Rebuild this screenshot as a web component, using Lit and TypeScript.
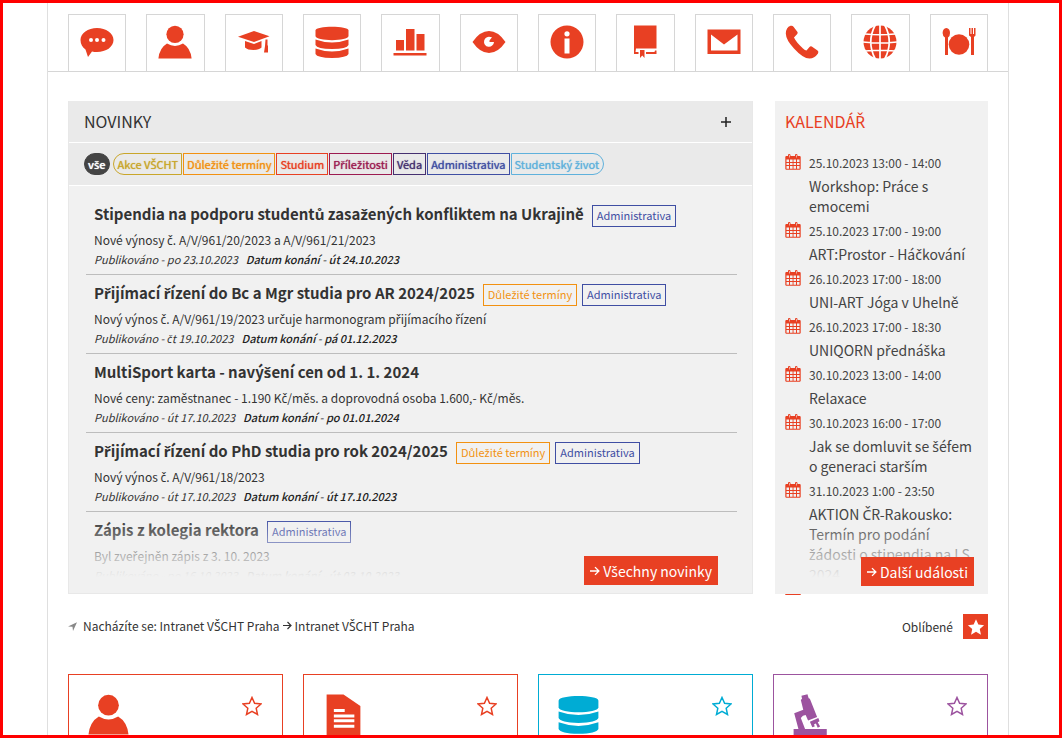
import { LitElement, html, css, svg } from "lit";
import { customElement, property } from "lit/decorators.js";

type Tag = { label: string; color: string };

const AKCE: Tag = { label: "Akce VŠCHT", color: "#c9a62a" };
const TERMINY: Tag = { label: "Důležité termíny", color: "#f29111" };
const STUDIUM: Tag = { label: "Studium", color: "#e84023" };
const PRILEZITOSTI: Tag = { label: "Příležitosti", color: "#9c1b51" };
const VEDA: Tag = { label: "Věda", color: "#453070" };
const ADMIN: Tag = { label: "Administrativa", color: "#3f4ea3" };
const ZIVOT: Tag = { label: "Studentský život", color: "#5fb1dc" };

const FILTERS = [AKCE, TERMINY, STUDIUM, PRILEZITOSTI, VEDA, ADMIN, ZIVOT];

const NEWS = [
  { title: "Stipendia na podporu studentů zasažených konfliktem na Ukrajině", tags: [ADMIN], text: "Nové výnosy č. A/V/961/20/2023 a A/V/961/21/2023", pub: "po 23.10.2023", date: "út 24.10.2023" },
  { title: "Přijímací řízení do Bc a Mgr studia pro AR 2024/2025", tags: [TERMINY, ADMIN], text: "Nový výnos č. A/V/961/19/2023 určuje harmonogram přijímacího řízení", pub: "čt 19.10.2023", date: "pá 01.12.2023" },
  { title: "MultiSport karta - navýšení cen od 1. 1. 2024", tags: [], text: "Nové ceny: zaměstnanec - 1.190 Kč/měs. a doprovodná osoba 1.600,- Kč/měs.", pub: "út 17.10.2023", date: "po 01.01.2024" },
  { title: "Přijímací řízení do PhD studia pro rok 2024/2025", tags: [TERMINY, ADMIN], text: "Nový výnos č. A/V/961/18/2023", pub: "út 17.10.2023", date: "út 17.10.2023" },
  { title: "Zápis z kolegia rektora", tags: [ADMIN], text: "Byl zveřejněn zápis z 3. 10. 2023", pub: "po 16.10.2023", date: "út 03.10.2023" },
];

const EVENTS = [
  ["25.10.2023 13:00 - 14:00", "Workshop: Práce s emocemi"],
  ["25.10.2023 17:00 - 19:00", "ART:Prostor - Háčkování"],
  ["26.10.2023 17:00 - 18:00", "UNI-ART Jóga v Uhelně"],
  ["26.10.2023 17:00 - 18:30", "UNIQORN přednáška"],
  ["30.10.2023 13:00 - 14:00", "Relaxace"],
  ["30.10.2023 16:00 - 17:00", "Jak se domluvit se šéfem o generaci starším"],
  ["31.10.2023 1:00 - 23:50", "AKTION ČR-Rakousko: Termín pro podání žádosti o stipendia na LS 2024"],
];

// The CJK family has no glyphs for these Czech letters, so they are set in Noto Sans.
const cz = (text: string) =>
  text.split(/([čďňřšťžůČĎŇŘŠŤŽŮ]+)/).map((part, i) => (i % 2 ? html`<span class="ext">${part}</span>` : part));

// Every tile icon is drawn on a 34 x 34 grid.
const ICONS: Record<string, unknown> = {
  chat: svg`<path fill-rule="evenodd" d="M17 3C26 3 33.500 8 33.500 15C33.500 22 26 27 17 27C15 27 13.500 26.800 12 26.400L8 32L5.500 24.500C2.500 22.500 .500 19 .500 15C.500 8 8 3 17 3ZM11 13A2 2 0 1 0 11 17A2 2 0 1 0 11 13ZM17 13A2 2 0 1 0 17 17A2 2 0 1 0 17 13ZM23.500 13A2 2 0 1 0 23.500 17A2 2 0 1 0 23.500 13Z"/>`,
  user: svg`<circle cx="17" cy="9.300" r="8.600"/><path d="M9 18.600Q17 23.500 25 18.600Q32.500 23 33.600 33.600H.400Q1.500 23 9 18.600Z"/>`,
  cap: svg`<path d="M1 11.800L17 6L32.500 11.300L17 17Z"/><path d="M8 16L17 19L24.500 16V22.500Q22 25 16.500 25Q10.500 25 8 22.500ZM28.500 14.500H30.500V20L31 21V27.500H27L28 21Z"/>`,
  database: svg`<path d="M.500 5.500C.500 .500 33.500 .500 33.500 5.500V11C33.500 16.500 .500 16.500 .500 11Z"/><path d="M.500 14.500Q17 20.500 33.500 14.500V20Q32 23.800 17 24Q2 23.800 .500 20ZM.500 23.500Q17 29.500 33.500 23.500V29Q32 32.700 17 33Q2 32.700 .500 29Z"/>`,
  chart: svg`<path d="M3 15H11V25.500H3ZM13 4H21.500V25.500H13ZM23.500 9H31.500V25.500H23.500ZM.500 28H33.500V30.500H.500Z"/>`,
  eye: svg`<path fill-rule="evenodd" d="M.500 17Q8 6 17 6T33.500 17Q26 28 17 28T.500 17ZM18.500 12A5 5 0 1 0 22 17H17.500V15.500L20 12.300Z"/>`,
  info: svg`<path fill-rule="evenodd" d="M17 .500A16.500 16.500 0 1 0 17 33.500A16.500 16.500 0 1 0 17 .500ZM17 6.200A2.600 2.600 0 1 1 17 11.400A2.600 2.600 0 1 1 17 6.200ZM14.500 13.500H19.500V28.500H14.500Z"/>`,
  book: svg`<path d="M6 .500H28.500V23.500H8L7.500 27H10.500V29H6ZM12 25H16.500V33L14.300 30.500L12 33ZM18 27H26.500L27 25.500H28.500V29H18Z"/>`,
  mail: svg`<path fill-rule="evenodd" d="M.500 4.500H33.500V29H.500ZM4 9.500V25.500H30.500V9.500L17 19.500Z"/>`,
  phone: svg`<path d="M5.500 .800Q7.500 .200 8.500 1.800L12.500 7Q13 8 12.200 9L9 12.500Q11 17 18 23.500Q20 25.500 21.500 25.600L24.500 22Q25.500 20.800 26.800 21.500L32.500 25.500Q34 26.500 33 28.500Q29.500 33.500 24.500 33.500Q18 33.500 9 23.500Q1 15 .800 8.500Q1 2.500 5.500 .800Z"/>`,
  globe: svg`<circle cx="17" cy="17" r="16.500"/><path stroke="#fff" stroke-width="1.700" fill="none" d="M17 0V34M0 17Q17 19 34 17M2 9Q17 10.500 32 9M2 26Q17 24.500 32 26M12 .500Q3.500 17 12 33.500M22 .500Q30.500 17 22 33.500"/>`,
  meal: svg`<circle cx="17" cy="19.500" r="10.300"/><path d="M4.300 3Q8 3.500 8 8Q8 11.500 6 12.500V30H3V12.500Q.600 11 .600 8Q.800 3.500 4.300 3ZM27 3H28.500V9H29.500V3H31V9H32V3H33.500V10.500L32 12V30H29V12L27 10.500Z"/>`,
  document: svg`<path fill-rule="evenodd" d="M3 .500H17L31 10V34H3ZM9 12.500V15H18V12.500ZM9 17V19.500H26V17ZM9 21V23.500H26V21ZM9 25.500V28H26V25.500Z"/>`,
  microscope: svg`<path d="M7 1.500L12 .300L13 3.500L14 4L20 19L12.500 22L10.500 17.500Q8 17.500 6.500 20L10 29H28V34H.500V29H4.500L1 16L8.500 13L6.500 5L7.500 4ZM14 23L21 20L22 22.500L20.500 23.500L22.500 27L20.500 28L19 24.500L17.500 25L18 27L16 27.500Z"/>`,
};

const arrow = html`<svg class="arrow" viewBox="0 0 9 9" aria-hidden="true"><path d="M0 4.500H8M4.500 1L8 4.500L4.500 8" fill="none" stroke="currentColor" stroke-width="1.200"></path></svg>`;
const STAR = "M10 1.500L12.600 7.300L19 8L14.200 12.300L15.500 18.500L10 15.300L4.500 18.500L5.800 12.300L1 8L7.400 7.300Z";

const base = css`
  * { box-sizing: border-box; }
  h2, h3, p, ul { margin: 0; padding: 0; font-size: 16px; font-weight: inherit; }
  ul { list-style: none; }
  a { color: inherit; text-decoration: none; }
  button { font: inherit; color: inherit; border: 0; background: none; padding: 0; cursor: pointer; }
  svg { display: block; }
  .ext { font-family: "Noto Sans", sans-serif; line-height: 1; }
`;

@customElement("tile-icon")
export class TileIcon extends LitElement {
  @property() name = "";
  static styles = css`
    :host { display: block; }
    svg { display: block; width: 100%; height: 100%; fill: currentColor; }
  `;
  render() {
    return html`<svg viewBox="0 0 34 34" aria-hidden="true">${ICONS[this.name]}</svg>`;
  }
}

const panelStyles = css`
  .fade { position: absolute; left: 0; right: 0; bottom: 0; height: 76px; background: linear-gradient(#f1f1f100, #f1f1f1 60px); }
  .more { position: absolute; bottom: 8px; display: flex; align-items: center; gap: 3px; height: 29px; padding: 0 6px; background: #e84023; color: #fff; font-size: 14px; line-height: 28px; white-space: nowrap; }
  .arrow { width: 10px; height: 10px; }
`;

@customElement("news-panel")
export class NewsPanel extends LitElement {
  static styles = [base, panelStyles, css`
    :host { display: flex; flex-direction: column; position: relative; background: #f1f1f1; border: 1px solid #e8e8e8; border-top: 0; }
    .head { display: flex; justify-content: space-between; align-items: center; height: 42px; padding: 0 20px 1px 15px; background: #eaeaea; border-bottom: 1px solid #fff; line-height: 20px; }
    .plus { width: 12px; height: 12px; margin-top: 2px; }
    .filters { display: flex; gap: 1px; align-items: center; height: 43px; padding: 0 15px; background: #eaeaea; border-bottom: 1px solid #fff; }
    .tag { display: block; height: 22px; padding: 0 4px; border: 1px solid; font-size: 11px; line-height: 19px; white-space: nowrap; }
    .filters .tag { padding: 0 3px; text-shadow: 0 0 1px currentColor; }
    .filters .all { padding: 0 3px; background: #444; border-color: #444; border-radius: 11px; color: #fff; margin-right: 2px; font-weight: 500; }
    .filters .first { border-radius: 11px 0 0 11px; padding-left: 4px; }
    .filters .last { border-radius: 0 11px 11px 0; padding-right: 4px; }
    .list { flex: 1; padding: 10px 15px 0 17px; min-height: 0; overflow: hidden; }
    .item { height: 79px; padding: 6px 8px 0; border-bottom: 1px solid #bdbdbd; }
    .line { display: flex; align-items: center; gap: 5px; height: 24px; }
    .title { font-size: 15px; font-weight: 700; line-height: 24px; color: #333; margin-right: 3px; white-space: nowrap; }
    .line .tag { margin-top: 3px; }
    .text { font-size: 12px; line-height: 20px; margin-top: 4px; }
    .dates { display: flex; gap: 8px; font-size: 11px; line-height: 18px; font-style: italic; }
    .when { font-weight: 500; color: #222; }
    .more { right: 34px; }
  `];
  render() {
    return html`
      <div class="head"><h2>NOVINKY</h2>
        <button aria-label="Rozbalit"><svg class="plus" viewBox="0 0 12 12"><path d="M1 6H11M6 1V11" stroke="#222" stroke-width="1.500"></path></svg></button>
      </div>
      <div class="filters">
        <button class="tag all">${cz("vše")}</button>
        ${FILTERS.map((t, i) => html`<button class="tag ${i === 0 ? "first" : i === FILTERS.length - 1 ? "last" : ""}" style="color:${t.color};border-color:${t.color}">${cz(t.label)}</button>`)}
      </div>
      <div class="list">
        ${NEWS.map((n) => html`<article class="item">
          <div class="line"><h3 class="title"><a href="#">${cz(n.title)}</a></h3>
            ${n.tags.map((t) => html`<span class="tag" style="color:${t.color}">${cz(t.label)}</span>`)}</div>
          <p class="text">${cz(n.text)}</p>
          <p class="dates"><span>${cz("Publikováno - " + n.pub)}</span><span class="when">${cz("Datum konání - " + n.date)}</span></p>
        </article>`)}
      </div>
      <div class="fade"></div>
      <a class="more" href="#">${arrow}<span>${cz("Všechny novinky")}</span></a>`;
  }
}

@customElement("calendar-panel")
export class CalendarPanel extends LitElement {
  static styles = [base, panelStyles, css`
    :host { display: flex; flex-direction: column; position: relative; background: #f1f1f1; }
    .head { padding: 10px 10px 18px; line-height: 20px; color: #e84023; }
    .list { flex: 1; min-height: 0; overflow: hidden; padding: 0 10px; margin-bottom: -1px; }
    .event { display: grid; grid-template-columns: 16px 1fr; column-gap: 8px; color: #444; }
    .icon { width: 16px; height: 16px; margin-top: 5px; }
    .date { font-size: 12px; line-height: 27px; white-space: nowrap; }
    .name { grid-column: 2; padding-bottom: 1px; font-size: 14px; line-height: 20px; }
    .more { right: 14px; }
  `];
  private icon = html`<svg class="icon" viewBox="0 0 16 16" aria-hidden="true"><path fill="#e84023" fill-rule="evenodd" d="M1 2H3V1Q3 0 4.200 0T5.500 1V2H10V1Q10 0 11.200 0T12.500 1V2H15L15.700 2.700V15L15 15.800H1L.300 15V2.700ZM1.500 5.500V8H4V5.500ZM5 5.500V8H7.600V5.500ZM8.500 5.500V8H11V5.500ZM12 5.500V8H14.500V5.500ZM1.500 9V11H4V9ZM5 9V11H7.600V9ZM8.500 9V11H11V9ZM12 9V11H14.500V9ZM1.500 12V14.700H4V12ZM5 12V14.700H7.600V12ZM8.500 12V14.700H11V12ZM12 12V14.700H14.500V12ZM4 1V3.500H4.600V1ZM11 1V3.500H11.600V1Z"></path></svg>`;
  render() {
    return html`
      <h2 class="head">${cz("KALENDÁŘ")}</h2>
      <ul class="list">
        ${EVENTS.map(([d, n]) => html`<li class="event">${this.icon}<span class="date">${d}</span><a class="name" href="#">${cz(n)}</a></li>`)}
        <li class="event">${this.icon}</li>
      </ul>
      <div class="fade"></div>
      <a class="more" href="#">${arrow}<span>${cz("Další události")}</span></a>`;
  }
}

@customElement("app-root")
export class AppRoot extends LitElement {
  static styles = [base, css`
    :host { display: block; font-family: "Noto Sans CJK SC", "Noto Sans", sans-serif; color: #333; }
    .frame { height: 100vh; overflow: hidden; border: 3px solid #f00; background: #fff; padding: 0 50px 0 44px; }
    .page { min-height: 100%; border: 1px solid #dfdfdf; border-width: 0 1px; }
    .tiles { display: grid; grid-template-columns: repeat(12, 1fr); gap: 20px; padding: 11px 20px 0; border-bottom: 1px solid #d6d6d6; }
    .tile { display: flex; justify-content: center; padding: 10px 0 12px; border: 1px solid #d6d6d6; border-bottom: 0; color: #e84023; }
    .tile tile-icon { width: 34px; height: 34px; }
    .panels { display: grid; grid-template-columns: 685fr 213fr; gap: 22px; padding: 29px 20px 0; }
    .panels > * { height: 493px; }
    .crumbs { display: flex; align-items: center; padding: 20px 20px 0; font-size: 12px; line-height: 23px; }
    .nav { width: 9px; height: 9px; margin-right: 6px; }
    .trail { display: flex; align-items: center; gap: 3px; flex: 1; padding-bottom: 2px; }
    .arrow { width: 9px; height: 9px; }
    .fav { display: flex; align-items: center; gap: 10px; }
    .box { display: grid; place-items: center; width: 25px; height: 25px; background: #e84023; }
    .star { width: 18px; height: 18px; }
    .cards { display: grid; grid-template-columns: repeat(4, 1fr); gap: 20px; padding: 35px 20px 0; }
    .card { display: flex; justify-content: space-between; align-items: flex-start; height: 180px; padding: 19px 20px 20px 19px; border: 1px solid; }
    .card tile-icon { width: 41px; height: 41px; }
    .card .star { width: 20px; height: 20px; margin-top: 2px; }
    .red { color: #e84023; }
    .cyan { color: #00acd4; }
    .violet { color: #9c539f; }
  `];
  render() {
    const tiles = ["chat", "user", "cap", "database", "chart", "eye", "info", "book", "mail", "phone", "globe", "meal"];
    const cards = [["user", "red"], ["document", "red"], ["database", "cyan"], ["microscope", "violet"]];
    return html`<div class="frame"><div class="page">
      <nav class="tiles">${tiles.map((t) => html`<a class="tile" href="#" aria-label=${t}><tile-icon name=${t}></tile-icon></a>`)}</nav>
      <main class="panels"><news-panel></news-panel><calendar-panel></calendar-panel></main>
      <div class="crumbs">
        <svg class="nav" viewBox="0 0 9 9" aria-hidden="true"><path fill="#888" d="M9 .300L5 9L4.500 4.700L0 4.500Z"></path></svg>
        <div class="trail"><span>${cz("Nacházíte se: Intranet VŠCHT Praha")}</span>${arrow}<span>${cz("Intranet VŠCHT Praha")}</span></div>
        <button class="fav">Oblíbené<span class="box"><svg class="star" viewBox="0 0 20 20"><path fill="#fff" d="${STAR}"></path></svg></span></button>
      </div>
      <div class="cards">${cards.map(([i, c]) => html`<section class="card ${c}"><tile-icon name=${i}></tile-icon>
        <button aria-label="Oblíbené"><svg class="star" viewBox="0 0 20 20"><path fill="none" stroke="currentColor" stroke-width="1.500" d="${STAR}"></path></svg></button></section>`)}</div>
    </div></div>`;
  }
}
